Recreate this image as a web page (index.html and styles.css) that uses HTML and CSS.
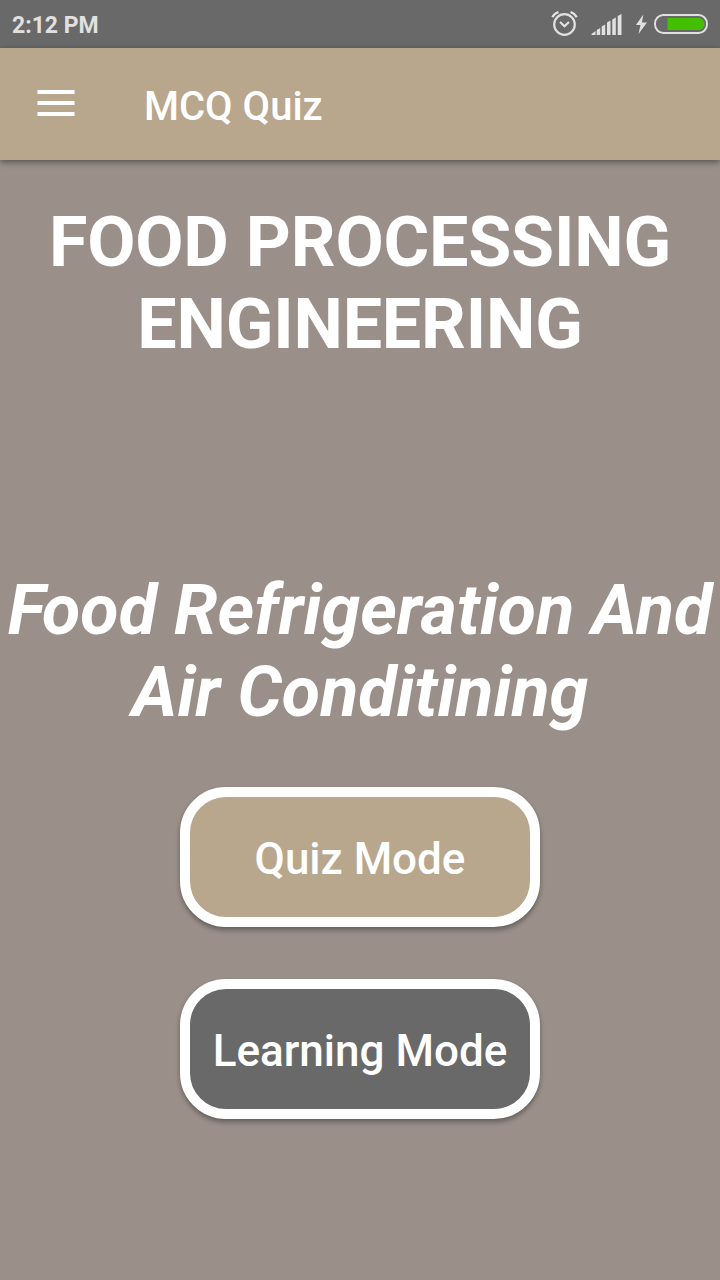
FILE: index.html
```
<!DOCTYPE html>
<html lang="en">

<head>
    <meta charset="UTF-8">
    <meta name="viewport" content="width=device-width, initial-scale=1.0">
    <title>MCQ Quiz</title>
    <link rel="stylesheet" href="styles.css">
</head>

<body>
    <!-- status bar -->
    <div class="status-bar">
        <span class="time">2:12 PM</span>
        <svg class="status-icons" width="170" height="48" viewBox="550 0 170 48" fill="none">
            <!-- alarm -->
            <g stroke="#e1e1e1" stroke-width="2.2">
                <circle cx="564.5" cy="24.500" r="10.3" />
                <path d="M552.3 17.200q1.700-3.600 6.200-5.200M576.700 17.200q-1.700-3.600-6.200-5.200M560 22l4.500 4.300 4.500-4.300" />
            </g>
            <!-- signal -->
            <path fill="#e1e1e1" d="M591.500 35v-1l4-3v4zM596.700 35v-5l3.500-2v7zM601.700 35v-8.500l3.500-2v10.500zM607 35v-12.500l3.500-2v14.500zM612.300 35v-15.500l3.500-2v17.500zM617.700 35v-19l3.800-2v21z" />
            <!-- charging -->
            <path fill="#e1e1e1" d="M643.300 14.500l-7.300 10.500h4.500l-2 9 8.500-11.500h-5z" />
            <!-- battery -->
            <rect x="655" y="15" width="52" height="18" rx="8.500" stroke="#e1e1e1" stroke-width="1.900" />
            <path fill="#43c100" d="M667.500 18h31a6 6 0 0 1 0 12h-31z" />
        </svg>
    </div>

    <!-- app bar -->
    <header class="app-bar">
        <svg class="menu" width="38" height="28" viewBox="0 0 38 28">
            <path d="M.5 3h37M.5 14h37M.5 25h37" stroke="#fff" stroke-width="4" />
        </svg>
        <span class="app-title">MCQ Quiz</span>
    </header>

    <main class="content">
        <h1 class="subject">FOOD PROCESSING ENGINEERING</h1>
        <h2 class="topic"><span class="cap">F</span>ood Refrigeration And Air Conditining</h2>
        <button class="btn btn-quiz">Quiz Mode</button>
        <button class="btn btn-learning">Learning Mode</button>
    </main>
</body>

</html>
```
FILE: styles.css
```
* {
    margin: 0;
    padding: 0;
    box-sizing: border-box;
}

body {
    width: 720px;
    height: 1280px;
    overflow: hidden;
    background-color: #9a8f89;
    color: #fff;
    font-family: Roboto, sans-serif;
}

.status-bar {
    display: flex;
    justify-content: space-between;
    height: 48px;
    padding-left: 12px;
    background-color: #696969;
}

.time {
    color: #e1e1e1;
    font-size: 23px;
    font-weight: 700;
    line-height: 52px;
}

.app-bar {
    display: flex;
    height: 112px;
    padding-left: 37px;
    background-color: #b8a68d;
    box-shadow: 0 2px 6px rgba(0, 0, 0, 0.45);
}

.menu {
    margin-top: 41px;
}

.app-title {
    margin-left: 69px;
    font-size: 40px;
    font-weight: 500;
    line-height: 118px;
}

.content {
    display: flex;
    flex-direction: column;
    align-items: center;
    padding-top: 41px;
    text-align: center;
}

.subject,
.topic {
    width: 720px;
    font-size: 70px;
    font-weight: 700;
    line-height: 82px;
}

.subject {
    letter-spacing: -0.2px;
}

.topic {
    margin-top: 204px;
    font-style: italic;
}

/* tighten the F against the next letter */
.cap {
    letter-spacing: -3px;
}

.btn {
    width: 360px;
    height: 140px;
    padding-top: 4px;
    border: 10px solid #fff;
    border-radius: 46px;
    color: #fff;
    font-family: inherit;
    font-size: 44px;
    font-weight: 500;
    box-shadow: 0 3px 5px rgba(0, 0, 0, 0.35);
}

.btn-quiz {
    margin-top: 54px;
    background-color: #b8a68d;
}

.btn-learning {
    margin-top: 52px;
    background-color: #696969;
}
```
